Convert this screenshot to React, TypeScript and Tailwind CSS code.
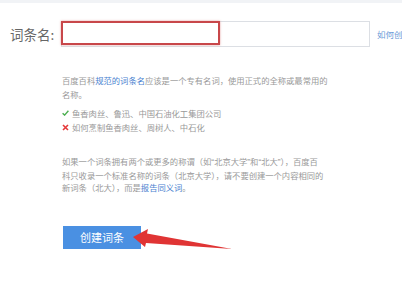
import React from "react";

// --- Check / cross marks ---
const CheckMark = () => (
  <svg width="7" height="6" viewBox="0 0 7 6" className="mr-[3px] shrink-0">
    <path d="M0.6 3.2 L2.6 5.1 L6.4 0.8" fill="none" stroke="#4caf50" strokeWidth="1.4" />
  </svg>
);

const CrossMark = () => (
  <svg width="7" height="7" viewBox="0 0 7 7" className="mr-[3px] shrink-0">
    <path d="M1 1 L6 6 M6 1 L1 6" fill="none" stroke="#e5393a" strokeWidth="1.6" />
  </svg>
);

// half-width quote marks, as the page renders them
const Q = ({ c }: { c: string }) => (
  <span style={{ fontFamily: '"Liberation Sans", sans-serif' }}>{c}</span>
);

export default function App() {
  return (
    <div
      className="relative w-[402px] h-[282px] overflow-hidden bg-white border-t-[3px] border-[#f1f3f6]"
      style={{ fontFamily: '"Noto Sans CJK SC", "Noto Sans", sans-serif' }}
    >
      {/* Name row */}
      <div className="flex items-center pt-[18px] pl-[10px]">
        <span className="w-[51px] shrink-0 text-[13.5px] leading-[26px] text-[#666]">词条名:</span>
        <div className="w-[309px] h-[26px] shrink-0 border border-[#dcdfe4] bg-white" />
        <span className="ml-[7px] shrink-0 text-[8.5px] text-[#6a9bd8] whitespace-nowrap">如何创建</span>
      </div>

      {/* Guide text */}
      <div className="ml-[62px] mt-[26px] text-[8.3px] text-[#999] whitespace-nowrap">
        <p className="leading-[14px]">
          百度百科<span className="text-[#4a7fd0]">规范的词条名</span>应该是一个专有名词，使用正式的全称或最常用的
          <br />
          名称。
        </p>
        <div className="mt-[5px] flex items-center h-[14px]">
          <CheckMark />
          <span>鱼香肉丝、鲁迅、中国石油化工集团公司</span>
        </div>
        <div className="flex items-center h-[14px]">
          <CrossMark />
          <span>如何烹制鱼香肉丝、周树人、中石化</span>
        </div>
        <p className="mt-[21px] leading-[12.5px]">
          如果一个词条拥有两个或更多的称谓（如<Q c="“" />北京大学<Q c="”" />和<Q c="“" />北大<Q c="”" />），百度百
          <br />
          科只收录一个标准名称的词条（北京大学），请不要创建一个内容相同的
          <br />
          新词条（北大），而是<span className="text-[#4a7fd0]">报告同义词</span>。
        </p>
      </div>

      {/* Create button */}
      <button
        type="button"
        className="ml-[63px] mt-[32px] w-[78px] h-[23px] bg-[#4a90e2] text-white text-[11px] leading-[23px]"
      >
        创建词条
      </button>

      {/* Annotation: red box over the input */}
      <div className="absolute left-[61px] top-[18px] w-[159px] h-[24px] border-2 border-[#c8474a] shadow-[0_0_2px_rgba(200,60,60,0.5)]" />

      {/* Annotation: red arrow toward the button */}
      <svg className="absolute left-0 top-0" width="402" height="282" viewBox="0 0 402 282">
        <polygon
          points="133,234 148,226 147,230.5 232,246 146,240 145,244"
          fill="#e03434"
        />
      </svg>
    </div>
  );
}
